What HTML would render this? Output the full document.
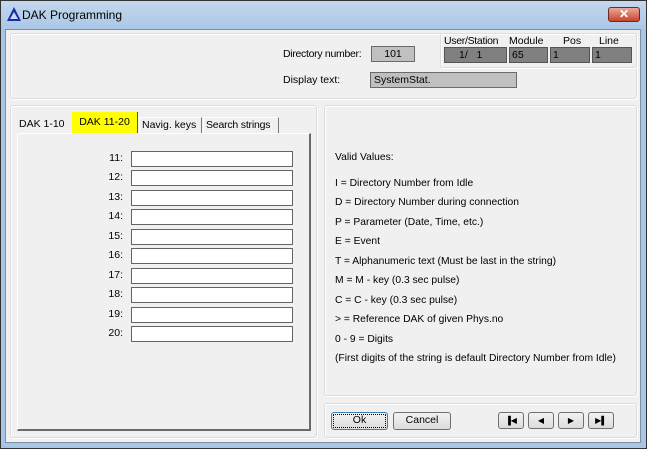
<!DOCTYPE html>
<html><head><style>
*{box-sizing:border-box;margin:0;padding:0}
body{width:647px;height:449px;overflow:hidden;background:#bcd2ea;font-family:"Liberation Sans",sans-serif;font-size:10.5px;color:#000;position:relative;white-space:nowrap}
.a{position:absolute}
.win{left:0;top:0;width:647px;height:449px;border:1px solid #333;background:linear-gradient(#c4d8ee,#a9c5e6 30px);}
.client{left:5px;top:29px;width:636px;height:414px;background:#f0f0f0;border:1px solid #7f8ea3}
.panel{border:1px solid #dcdcdc;border-radius:3px;box-shadow:inset 1px 1px 0 #fff,1px 1px 0 #fff}
.gray{background:#c0c0c0;border:1px solid #6a6a6a;}
.dark{background:#808080;border:1px solid #555;color:#000}
.fld{background:#fff;border:1px solid #646464;width:162px;height:16px;left:131px}
.lab{width:30px;text-align:right;left:93px}
.btn{border:1px solid #707070;border-radius:3px;background:linear-gradient(#f2f2f2,#dcdcdc);text-align:center;line-height:15px}
.tab{top:117px;height:16px;line-height:15px;padding:0 2px;border:1px solid #fff;border-right:1px solid #777;border-bottom:none}
.t{left:335px;font-size:10.3px}
</style></head><body>
<div class="a win"></div>
<div class="a" style="left:7px;top:7px;width:0;height:0;border-left:7px solid transparent;border-right:7px solid transparent;border-bottom:14px solid #1a2ea0"></div>
<div class="a" style="left:10px;top:12px;width:0;height:0;border-left:4px solid transparent;border-right:4px solid transparent;border-bottom:7px solid #c8d8ff"></div>
<div class="a" style="left:22px;top:8px;font-size:12px">DAK Programming</div>
<div class="a" style="left:608px;top:7px;width:32px;height:15px;border:1px solid #6b2a20;border-radius:3px;background:linear-gradient(#e9a89a,#c8442c);color:#fff;font-weight:bold;text-align:center;line-height:13px;font-size:12px">✕</div>
<div class="a client"></div>
<div class="a panel" style="left:10px;top:33px;width:627px;height:66px"></div>
<div class="a panel" style="left:440px;top:33px;width:197px;height:35px"></div>
<div class="a" style="left:283px;top:48px;letter-spacing:-0.3px">Directory number:</div>
<div class="a gray" style="left:371px;top:46px;width:44px;height:16px;text-align:center;line-height:14px">101</div>
<div class="a" style="left:444px;top:35px;letter-spacing:-0.3px">User/Station</div>
<div class="a" style="left:509px;top:35px">Module</div>
<div class="a" style="left:563px;top:35px">Pos</div>
<div class="a" style="left:599px;top:35px">Line</div>
<div class="a dark" style="left:444px;top:47px;width:63px;height:16px;line-height:14px;padding-left:14px">1/&nbsp;&nbsp;&nbsp;1</div>
<div class="a dark" style="left:509px;top:47px;width:39px;height:16px;line-height:14px;padding-left:2px">65</div>
<div class="a dark" style="left:550px;top:47px;width:40px;height:16px;line-height:14px;padding-left:2px">1</div>
<div class="a dark" style="left:592px;top:47px;width:40px;height:16px;line-height:14px;padding-left:2px">1</div>
<div class="a" style="left:283px;top:74px">Display text:</div>
<div class="a gray" style="left:370px;top:72px;width:147px;height:16px;line-height:14px;padding-left:3px">SystemStat.</div>

<div class="a panel" style="left:10px;top:105px;width:307px;height:333px"></div>
<div class="a panel" style="left:324px;top:105px;width:313px;height:291px"></div>
<div class="a panel" style="left:324px;top:403px;width:313px;height:35px"></div>

<div class="a" style="left:17px;top:133px;width:294px;height:298px;border-top:1px solid #fff;border-left:1px solid #fff;border-right:2px solid #6a6a6a;border-bottom:2px solid #6a6a6a;background:#f0f0f0"></div>
<div class="a tab" style="left:19px;border:none;padding:0">DAK 1-10</div>
<div class="a tab" style="left:72px;top:112px;height:21px;width:66px;background:#ffff00;border:none;border-right:1px solid #555;line-height:20px;text-align:center;padding:0">DAK 11-20</div>
<div class="a tab" style="left:139px;width:63px">Navig. keys</div>
<div class="a tab" style="left:203px;width:76px;letter-spacing:-0.2px">Search strings</div>

<div class="a lab" style="top:152px">11:</div><div class="a fld" style="top:151px"></div>
<div class="a lab" style="top:171px">12:</div><div class="a fld" style="top:170px"></div>
<div class="a lab" style="top:191px">13:</div><div class="a fld" style="top:190px"></div>
<div class="a lab" style="top:210px">14:</div><div class="a fld" style="top:209px"></div>
<div class="a lab" style="top:230px">15:</div><div class="a fld" style="top:229px"></div>
<div class="a lab" style="top:249px">16:</div><div class="a fld" style="top:248px"></div>
<div class="a lab" style="top:269px">17:</div><div class="a fld" style="top:268px"></div>
<div class="a lab" style="top:288px">18:</div><div class="a fld" style="top:287px"></div>
<div class="a lab" style="top:308px">19:</div><div class="a fld" style="top:307px"></div>
<div class="a lab" style="top:327px">20:</div><div class="a fld" style="top:326px"></div>

<div class="a t" style="top:152px">Valid Values:</div>
<div class="a t" style="top:178px">I = Directory Number from Idle</div>
<div class="a t" style="top:197px">D = Directory Number during connection</div>
<div class="a t" style="top:217px">P = Parameter (Date, Time, etc.)</div>
<div class="a t" style="top:236px">E = Event</div>
<div class="a t" style="top:256px">T = Alphanumeric text (Must be last in the string)</div>
<div class="a t" style="top:275px">M = M - key (0.3 sec pulse)</div>
<div class="a t" style="top:295px">C = C - key (0.3 sec pulse)</div>
<div class="a t" style="top:314px">&gt; = Reference DAK of given Phys.no</div>
<div class="a t" style="top:334px">0 - 9 = Digits</div>
<div class="a t" style="top:353px">(First digits of the string is default Directory Number from Idle)</div>

<div class="a btn" style="left:331px;top:412px;width:57px;height:18px;border:1px solid #3c7fb1;outline:1px dotted #000;outline-offset:-3px">Ok</div>
<div class="a btn" style="left:393px;top:412px;width:58px;height:18px">Cancel</div>
<div class="a btn" style="left:498px;top:412px;width:26px;height:17px;font-size:8px">▐◀</div>
<div class="a btn" style="left:528px;top:412px;width:26px;height:17px;font-size:8px">◀</div>
<div class="a btn" style="left:558px;top:412px;width:26px;height:17px;font-size:8px">▶</div>
<div class="a btn" style="left:588px;top:412px;width:26px;height:17px;font-size:8px">▶▌</div>
</body></html>
